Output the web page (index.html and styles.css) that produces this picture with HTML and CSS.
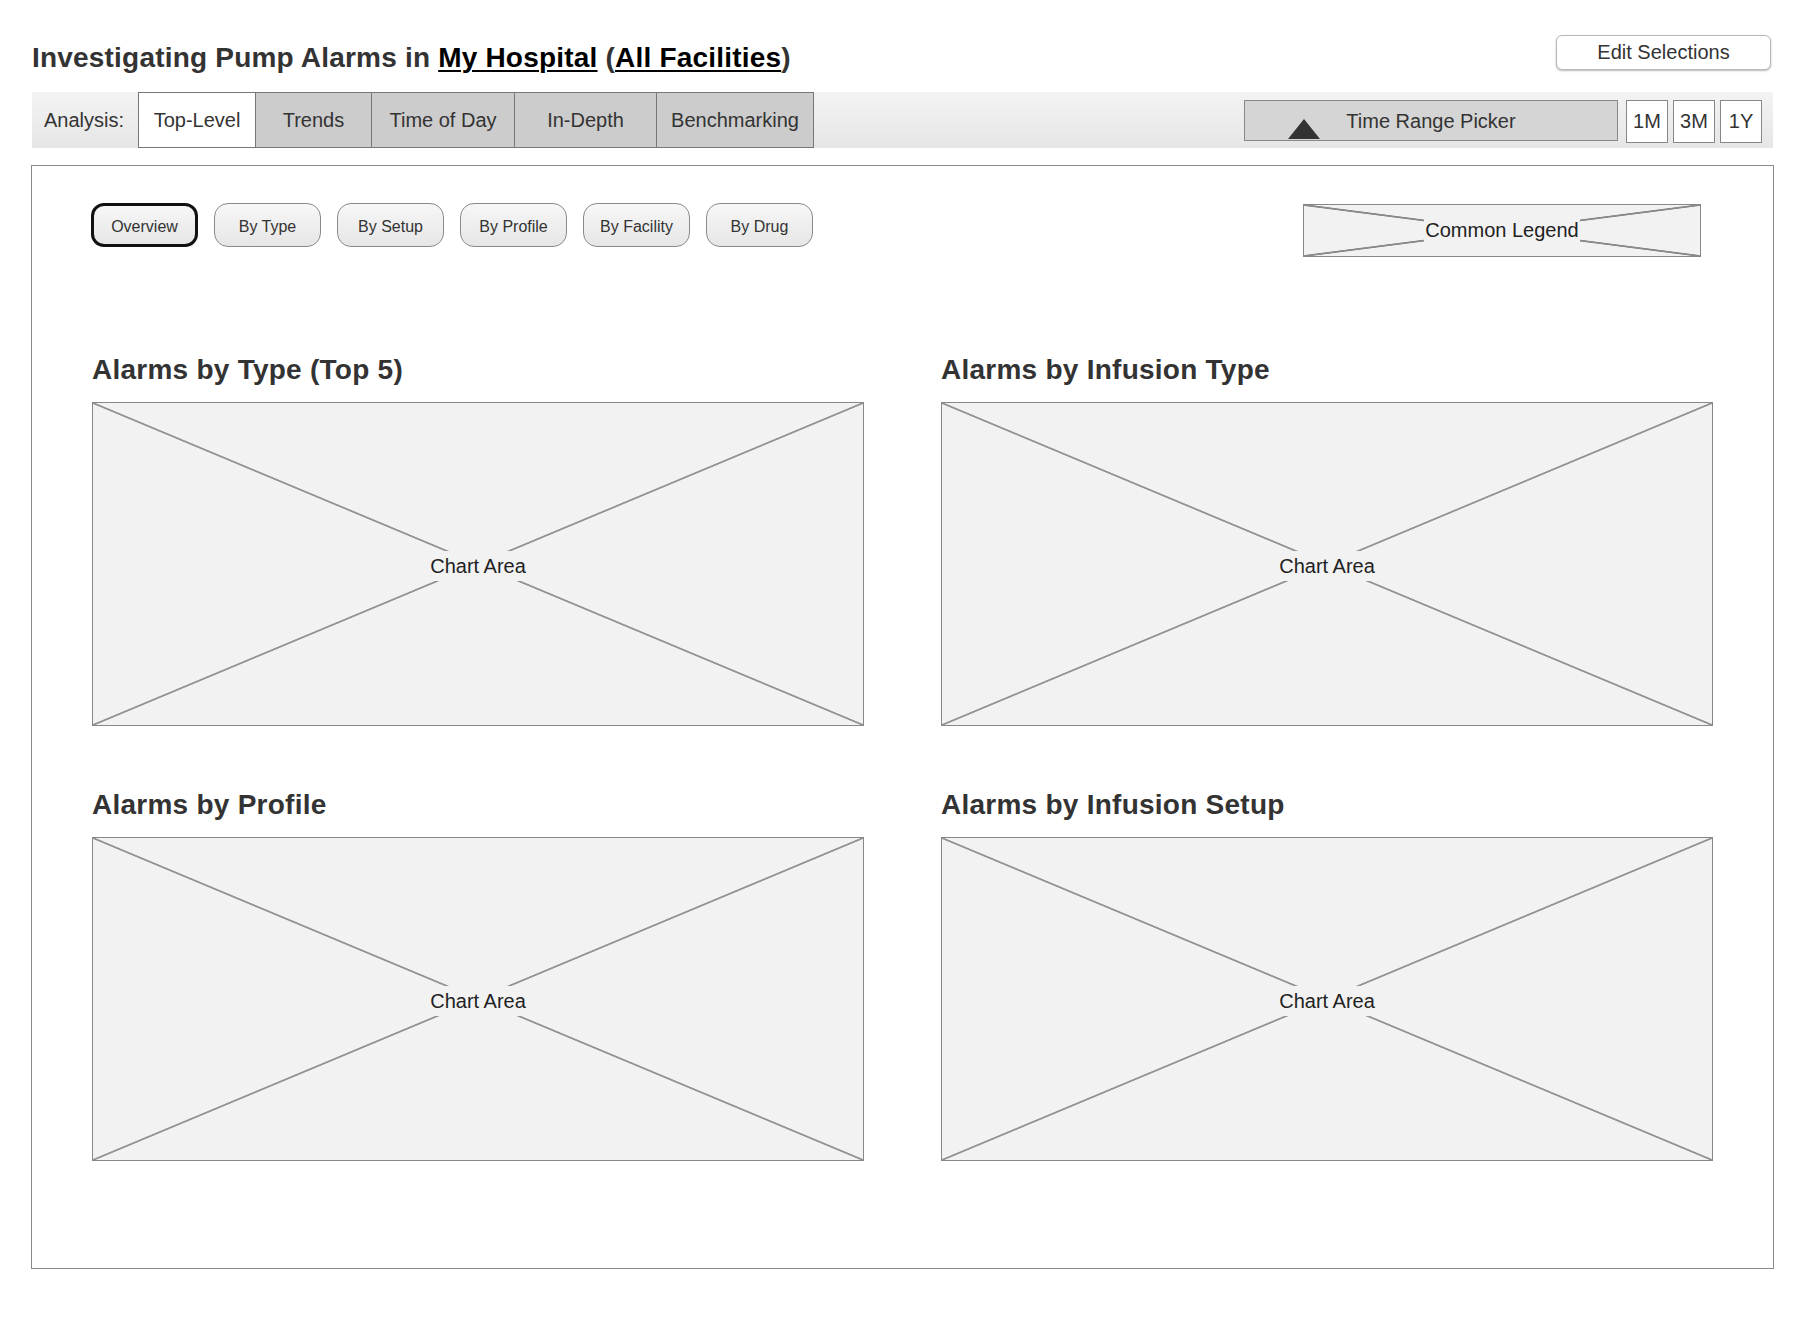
FILE: index.html
```html
<!DOCTYPE html>
<html lang="en">
<head>
<meta charset="utf-8">
<title>Investigating Pump Alarms</title>
<link rel="stylesheet" href="styles.css">
</head>
<body>
<div class="page">
  <header class="header">
    <h1 class="title">Investigating Pump Alarms in <a class="link">My Hospital</a> (<a class="link">All Facilities</a>)</h1>
    <button class="edit-btn">Edit Selections</button>
  </header>

  <nav class="analysis-bar">
    <span class="analysis-label">Analysis:</span>
    <div class="tabs">
      <span class="tab tab-active tab-top">Top-Level</span>
      <span class="tab tab-trends">Trends</span>
      <span class="tab tab-time">Time of Day</span>
      <span class="tab tab-depth">In-Depth</span>
      <span class="tab tab-bench">Benchmarking</span>
    </div>
    <div class="time-controls">
      <div class="picker"><span class="picker-arrow"></span>Time Range Picker</div>
      <span class="range-btn">1M</span>
      <span class="range-btn">3M</span>
      <span class="range-btn">1Y</span>
    </div>
  </nav>

  <main class="panel">
    <div class="toolbar">
      <div class="pills">
        <span class="pill pill-active">Overview</span>
        <span class="pill">By Type</span>
        <span class="pill">By Setup</span>
        <span class="pill">By Profile</span>
        <span class="pill">By Facility</span>
        <span class="pill">By Drug</span>
      </div>
      <div class="legend"><span class="legend-label">Common Legend</span></div>
    </div>

    <div class="charts">
      <section class="chart-card">
        <h2 class="chart-title">Alarms by Type (Top 5)</h2>
        <div class="chart-box"><span class="chart-label">Chart Area</span></div>
      </section>
      <section class="chart-card">
        <h2 class="chart-title">Alarms by Infusion Type</h2>
        <div class="chart-box"><span class="chart-label">Chart Area</span></div>
      </section>
      <section class="chart-card">
        <h2 class="chart-title">Alarms by Profile</h2>
        <div class="chart-box"><span class="chart-label">Chart Area</span></div>
      </section>
      <section class="chart-card">
        <h2 class="chart-title">Alarms by Infusion Setup</h2>
        <div class="chart-box"><span class="chart-label">Chart Area</span></div>
      </section>
    </div>
  </main>
</div>
</body>
</html>
```

FILE: styles.css
```css
body {
  margin: 0;
  background: #fff;
  color: #333;
  font-family: "Liberation Sans", Arial, sans-serif;
}

.page {
  width: 1743px;
  margin-left: 31px;
}

/* Header */
.header {
  display: flex;
  justify-content: space-between;
  align-items: flex-start;
  padding: 35px 3px 0 1px;
  margin-bottom: 18px;
}

.title {
  margin: 7px 0 0;
  font-size: 28px;
  line-height: 32px;
  font-weight: bold;
  letter-spacing: 0.2px;
  color: #333;
}

.link {
  color: #000;
  text-decoration: underline;
  text-decoration-thickness: 2px;
  text-underline-offset: 3px;
}

.edit-btn {
  width: 215px;
  height: 35px;
  box-sizing: border-box;
  border: 1px solid #b8b8b8;
  border-radius: 6px;
  background: #fff;
  box-shadow: 0 1px 2px rgba(0, 0, 0, 0.28);
  font-family: "Liberation Sans", Arial, sans-serif;
  font-size: 20px;
  color: #333;
  padding: 0;
}

/* Analysis bar */
.analysis-bar {
  display: flex;
  align-items: stretch;
  height: 56px;
  margin: 0 1px;
  background: linear-gradient(#f3f3f3, #e6e6e6);
}

.analysis-label {
  display: flex;
  align-items: center;
  width: 106px;
  box-sizing: border-box;
  padding-left: 12px;
  font-size: 20px;
}

.tabs {
  display: flex;
}

.tab {
  display: flex;
  align-items: center;
  justify-content: center;
  box-sizing: border-box;
  background: #cccccc;
  border: 1px solid #777;
  border-left: none;
  font-size: 20px;
  color: #333;
}

.tab:first-child {
  border-left: 1px solid #777;
}

.tab-active {
  background: #fff;
}

.tab-top { width: 118px; }
.tab-trends { width: 116px; }
.tab-time { width: 143px; }
.tab-depth { width: 142px; }
.tab-bench { width: 157px; }

.time-controls {
  margin-left: auto;
  display: flex;
  align-items: flex-start;
  gap: 5px;
  padding: 8px 11px 0 0;
}

.picker {
  position: relative;
  width: 374px;
  height: 41px;
  box-sizing: border-box;
  padding-top: 2px;
  margin-right: 3px;
  background: #d5d5d5;
  border: 1px solid #888;
  display: flex;
  align-items: center;
  justify-content: center;
  font-size: 20px;
  color: #333;
}

.picker-arrow {
  position: absolute;
  left: 43px;
  bottom: 1px;
  width: 0;
  height: 0;
  border-left: 16px solid transparent;
  border-right: 16px solid transparent;
  border-bottom: 20px solid #333;
}

.range-btn {
  width: 42px;
  height: 43px;
  box-sizing: border-box;
  border: 1px solid #888;
  background: #fff;
  display: flex;
  align-items: center;
  justify-content: center;
  font-size: 20px;
  color: #333;
}

/* Main panel */
.panel {
  margin-top: 17px;
  border: 1px solid #8a8a8a;
  padding: 37px 60px 107px;
}

.toolbar {
  display: flex;
  justify-content: space-between;
  align-items: flex-start;
  height: 54px;
}

.pills {
  display: flex;
  gap: 16px;
  margin-left: -1px;
}

.pill {
  width: 107px;
  height: 44px;
  box-sizing: border-box;
  padding-top: 3px;
  border: 1px solid #8a8a8a;
  border-radius: 14px;
  background: linear-gradient(#f7f7f7, #e6e6e6);
  display: flex;
  align-items: center;
  justify-content: center;
  font-size: 16px;
  color: #333;
}

.pill-active {
  border: 3px solid #111;
  border-radius: 13px;
}

.legend {
  margin: 1px 12px 0 0;
  width: 398px;
  height: 53px;
  box-sizing: border-box;
  border: 1px solid #888;
  background:
    linear-gradient(to top right, transparent calc(50% - 1.3px), #8a8a8a calc(50% - 0.6px), #8a8a8a calc(50% + 0.6px), transparent calc(50% + 1.3px)),
    linear-gradient(to top left, transparent calc(50% - 1.3px), #8a8a8a calc(50% - 0.6px), #8a8a8a calc(50% + 0.6px), transparent calc(50% + 1.3px)),
    #f2f2f2;
  display: flex;
  align-items: center;
  justify-content: center;
}

.legend-label {
  background: #f2f2f2;
  font-size: 20px;
  line-height: 23px;
  padding: 0 1px;
  color: #222;
}

/* Charts */
.charts {
  margin-top: 95px;
  display: grid;
  grid-template-columns: 1fr 1fr;
  column-gap: 77px;
  row-gap: 61px;
}

.chart-title {
  margin: 2px 0 16px;
  font-size: 28px;
  line-height: 32px;
  font-weight: bold;
  letter-spacing: 0.25px;
  color: #333;
}

.chart-box {
  height: 324px;
  box-sizing: border-box;
  border: 1px solid #888;
  background:
    linear-gradient(to top right, transparent calc(50% - 1.3px), #959595 calc(50% - 0.55px), #959595 calc(50% + 0.55px), transparent calc(50% + 1.3px)),
    linear-gradient(to top left, transparent calc(50% - 1.3px), #959595 calc(50% - 0.55px), #959595 calc(50% + 0.55px), transparent calc(50% + 1.3px)),
    #f2f2f2;
  display: flex;
  align-items: center;
  justify-content: center;
}

.chart-label {
  margin-top: 4px;
  background: #f2f2f2;
  font-size: 20px;
  line-height: 22px;
  padding: 4px 2px;
  color: #222;
}
```
